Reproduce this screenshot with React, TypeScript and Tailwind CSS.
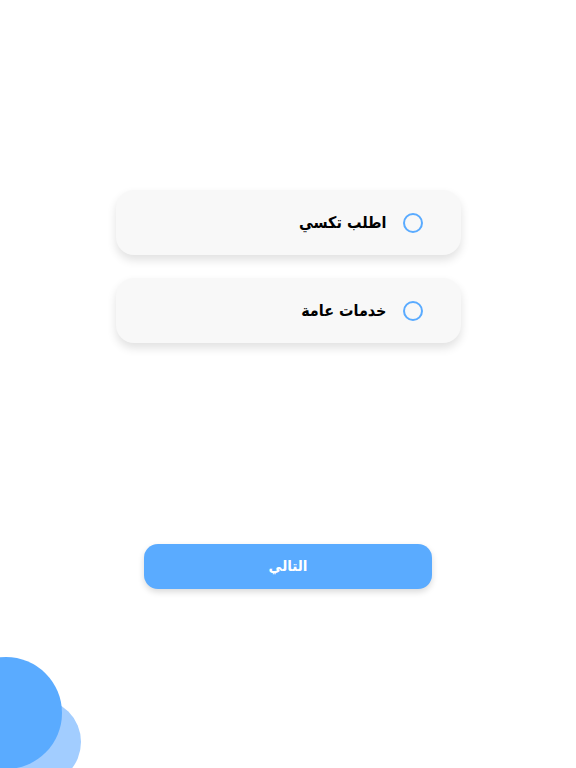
import React from "react";

function Option({ label }: { label: string }) {
  return (
    <div
      dir="rtl"
      className="flex h-[65px] w-[345px] items-center gap-[16px] rounded-[18px] bg-[#f8f8f8] pr-[38px] shadow-[0_5px_10px_rgba(0,0,0,0.12)]"
    >
      <span className="block h-[20px] w-[20px] shrink-0 rounded-full border-2 border-[#5aabff]" />
      <span className="text-[16px] font-bold text-black">{label}</span>
    </div>
  );
}

export default function App() {
  return (
    <div
      className="relative h-[768px] w-full overflow-hidden bg-white"
      style={{ fontFamily: '"DejaVu Sans Condensed", "DejaVu Sans", sans-serif' }}
    >
      <div className="flex flex-col items-center pt-[190px]">
        <div className="flex flex-col gap-[23px]">
          <Option label="اطلب تكسي" />
          <Option label="خدمات عامة" />
        </div>
        <button
          dir="rtl"
          className="mt-[201px] flex h-[45px] w-[288px] items-center justify-center rounded-[14px] bg-[#5aabff] text-[15px] font-bold text-white shadow-[0_3px_6px_rgba(0,0,0,0.15)]"
        >
          التالي
        </button>
      </div>
      <div className="absolute left-[-5px] top-[699px] h-[86px] w-[86px] rounded-full bg-[#a2cdff]" />
      <div className="absolute left-[-50px] top-[657px] h-[112px] w-[112px] rounded-full bg-[#5aabff]" />
    </div>
  );
}
